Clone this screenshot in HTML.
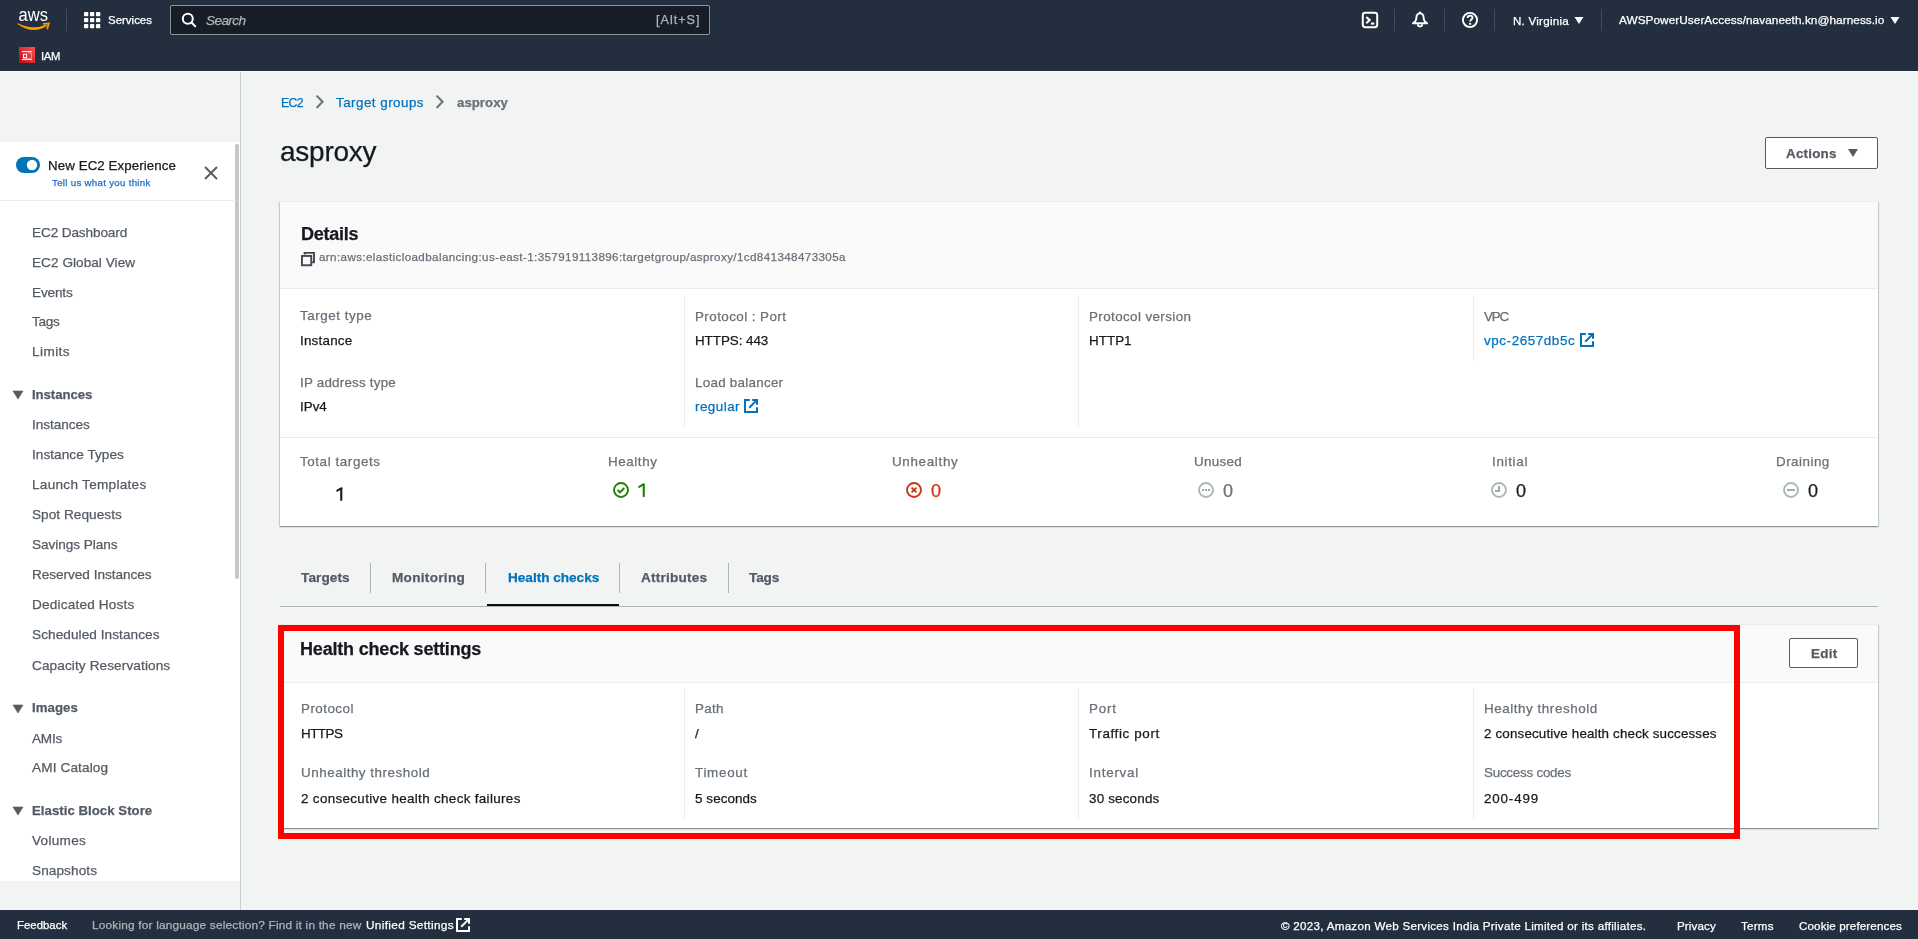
<!DOCTYPE html>
<html><head><meta charset="utf-8"><title>asproxy | EC2</title>
<style>
html,body{margin:0;padding:0}
body{width:1918px;height:939px;overflow:hidden;position:relative;background:#f2f3f3;font-family:"Liberation Sans",sans-serif}
.t{position:absolute;white-space:nowrap;line-height:1;will-change:transform;-webkit-text-stroke:0.25px currentColor}
.r{position:absolute}
svg.r{overflow:visible;will-change:transform}
</style></head><body>
<div class="r" style="left:0px;top:0px;width:1918px;height:71px;background:#232f3e"></div>
<div class="r" style="left:0px;top:71px;width:1918px;height:1px;background:#f9fafa"></div>
<svg class="r" style="left:0px;top:0px" width="60" height="40" viewBox="0 0 60 40">
<text x="18.6" y="20.7" font-family="Liberation Sans" font-size="18.2" fill="#fff" textLength="29.4" lengthAdjust="spacingAndGlyphs">aws</text>
<path d="M17.7 22.9 Q 32.5 30.8 46.3 24.5 L46.9 25.9 Q 32.5 35 17.5 23.9 Z" fill="#f90"/>
<path d="M43.6 23.9 L48.8 23.4 L47.3 28.4" stroke="#f90" stroke-width="1.8" fill="none" stroke-linecap="round" stroke-linejoin="miter"/>
</svg>
<div class="r" style="left:66px;top:9px;width:1px;height:22px;background:#414d5c"></div>
<svg class="r" style="left:84px;top:12px" width="17" height="17" viewBox="0 0 17 17"><rect x="0" y="0" width="4.3" height="4.3" rx="0.8" fill="#fff"/><rect x="6" y="0" width="4.3" height="4.3" rx="0.8" fill="#fff"/><rect x="12" y="0" width="4.3" height="4.3" rx="0.8" fill="#fff"/><rect x="0" y="6" width="4.3" height="4.3" rx="0.8" fill="#fff"/><rect x="6" y="6" width="4.3" height="4.3" rx="0.8" fill="#fff"/><rect x="12" y="6" width="4.3" height="4.3" rx="0.8" fill="#fff"/><rect x="0" y="12" width="4.3" height="4.3" rx="0.8" fill="#fff"/><rect x="6" y="12" width="4.3" height="4.3" rx="0.8" fill="#fff"/><rect x="12" y="12" width="4.3" height="4.3" rx="0.8" fill="#fff"/></svg>
<div class="t" style="left:108.00px;top:15.47px;font-size:11.5px;letter-spacing:-0.015px;color:#fff;">Services</div>
<div class="r" style="left:170px;top:5px;width:540px;height:30px;background:#161d26;border:1px solid #879596;border-radius:2px;box-sizing:border-box"></div>
<svg class="r" style="left:181px;top:12px" width="16" height="16" viewBox="0 0 16 16">
<circle cx="6.8" cy="6.8" r="5" stroke="#fff" stroke-width="2" fill="none"/><path d="M10.5 10.5 L14.2 14.2" stroke="#fff" stroke-width="2" stroke-linecap="round"/></svg>
<div class="t" style="left:206.00px;top:13.59px;font-size:13.6px;letter-spacing:-0.616px;color:#aab7b8;font-style:italic;">Search</div>
<div class="t" style="left:655.60px;top:14.33px;font-size:12.6px;letter-spacing:0.991px;color:#aab7b8;">[Alt+S]</div>
<svg class="r" style="left:1361px;top:11px" width="18" height="18" viewBox="0 0 18 18">
<rect x="1.8" y="1.8" width="14.4" height="14.4" rx="2.4" stroke="#fff" stroke-width="2" fill="none"/>
<path d="M5.3 6 L8.7 9.1 L5.3 12.3" stroke="#fff" stroke-width="2.1" fill="none"/>
<path d="M9.9 12.6 H13.3" stroke="#fff" stroke-width="2.1"/></svg>
<div class="r" style="left:1394px;top:9px;width:1px;height:22px;background:#414d5c"></div>
<svg class="r" style="left:1411px;top:11px" width="18" height="18" viewBox="0 0 18 18">
<path d="M9 2.4 C 6.5 2.4, 5.6 4.2, 5.4 6.2 L 5.1 8.6 C 4.9 10.1, 3.6 11.2, 1.9 12.3 H16.1 C 14.4 11.2, 13.1 10.1, 12.9 8.6 L 12.6 6.2 C 12.4 4.2, 11.5 2.4, 9 2.4 Z" stroke="#fff" stroke-width="1.9" fill="none" stroke-linejoin="round"/>
<circle cx="9" cy="1.5" r="1.1" fill="#fff"/>
<path d="M6.8 13.2 A2.2 2.2 0 0 0 11.2 13.2" stroke="#fff" stroke-width="1.9" fill="none"/></svg>
<div class="r" style="left:1444px;top:9px;width:1px;height:22px;background:#414d5c"></div>
<svg class="r" style="left:1461px;top:11px" width="18" height="18" viewBox="0 0 18 18">
<circle cx="9" cy="9" r="7.1" stroke="#fff" stroke-width="1.9" fill="none"/>
<path d="M6.6 7.1 C 6.6 5.4, 7.9 4.6, 9.1 4.6 C 10.5 4.6, 11.5 5.6, 11.5 6.8 C 11.5 8.4, 9.1 8.7, 9.1 10.6" stroke="#fff" stroke-width="1.9" fill="none"/>
<rect x="8.1" y="11.8" width="2" height="2" fill="#fff"/></svg>
<div class="r" style="left:1494px;top:9px;width:1px;height:22px;background:#414d5c"></div>
<div class="t" style="left:1512.60px;top:15.38px;font-size:11.6px;letter-spacing:0.237px;color:#fff;">N. Virginia</div>
<svg class="r" style="left:1574px;top:16px" width="10" height="9" viewBox="0 0 10 9"><path d="M0.5 1 H9.5 L5 8 Z" fill="#fff"/></svg>
<div class="r" style="left:1601px;top:9px;width:1px;height:22px;background:#414d5c"></div>
<div class="t" style="left:1619.00px;top:15.21px;font-size:11.8px;letter-spacing:0.049px;color:#fff;">AWSPowerUserAccess/navaneeth.kn@harness.io</div>
<svg class="r" style="left:1890px;top:16px" width="10" height="9" viewBox="0 0 10 9"><path d="M0.5 1 H9.5 L5 8 Z" fill="#fff"/></svg>
<svg class="r" style="left:19px;top:47px" width="16" height="16" viewBox="0 0 16 16">
<defs><linearGradient id="ig" x1="0" y1="1" x2="1" y2="0"><stop offset="0" stop-color="#bd0816"/><stop offset="1" stop-color="#ff5252"/></linearGradient></defs>
<rect width="16" height="16" fill="url(#ig)"/>
<path d="M3 4.6 H13 M3 12.6 H13" stroke="#fff" stroke-width="1" opacity="0.95"/>
<rect x="4.4" y="7.3" width="3.2" height="3.2" stroke="#fff" stroke-width="1" fill="none"/>
<path d="M9 6 H12.3 V11.4 H4" stroke="#fff" stroke-width="0.8" fill="none" opacity="0.6"/></svg>
<div class="t" style="left:40.80px;top:50.53px;font-size:11.3px;letter-spacing:-0.343px;color:#fff;">IAM</div>
<div class="r" style="left:0px;top:142px;width:240px;height:739px;background:#fff"></div>
<div class="r" style="left:240px;top:72px;width:1px;height:838px;background:#cbd0d2"></div>
<div class="r" style="left:235.4px;top:143.5px;width:3.3px;height:435.7px;background:#c4c7cc;border-radius:1.6px"></div>
<div class="r" style="left:0px;top:200px;width:236px;height:1px;background:#eaeded"></div>
<svg class="r" style="left:16px;top:157px" width="24" height="16" viewBox="0 0 24 16">
<rect x="0" y="0" width="24" height="16" rx="8" fill="#0073bb"/><circle cx="16" cy="8" r="5.2" fill="#fff"/></svg>
<div class="t" style="left:48.00px;top:159.34px;font-size:13.3px;letter-spacing:0.093px;color:#16191f;">New EC2 Experience</div>
<div class="t" style="left:51.50px;top:178.39px;font-size:9.7px;letter-spacing:0.299px;color:#1b6fc4;">Tell us what you think</div>
<svg class="r" style="left:203px;top:165px" width="16" height="16" viewBox="0 0 16 16">
<path d="M2 2 L14 14 M14 2 L2 14" stroke="#545b64" stroke-width="1.9"/></svg>
<div class="t" style="left:32.40px;top:225.59px;font-size:13.6px;letter-spacing:-0.122px;color:#545b64;">EC2 Dashboard</div>
<div class="t" style="left:32.40px;top:255.89px;font-size:13.6px;letter-spacing:0.042px;color:#545b64;">EC2 Global View</div>
<div class="t" style="left:32.40px;top:285.69px;font-size:13.6px;letter-spacing:-0.156px;color:#545b64;">Events</div>
<div class="t" style="left:32.40px;top:315.49px;font-size:13.6px;letter-spacing:-0.277px;color:#545b64;">Tags</div>
<div class="t" style="left:32.40px;top:345.39px;font-size:13.6px;letter-spacing:0.414px;color:#545b64;">Limits</div>
<div class="t" style="left:31.80px;top:387.63px;font-size:13.2px;letter-spacing:-0.073px;color:#545b64;font-weight:700;">Instances</div>
<svg class="r" style="left:12px;top:389.8px" width="12" height="10" viewBox="0 0 12 10"><path d="M1 1 H11 L6 9 Z" fill="#545b64" stroke="#545b64" stroke-width="0.6" stroke-linejoin="round"/></svg>
<div class="t" style="left:32.40px;top:418.49px;font-size:13.6px;letter-spacing:-0.038px;color:#545b64;">Instances</div>
<div class="t" style="left:32.40px;top:448.39px;font-size:13.6px;letter-spacing:0.052px;color:#545b64;">Instance Types</div>
<div class="t" style="left:32.40px;top:478.49px;font-size:13.6px;letter-spacing:0.278px;color:#545b64;">Launch Templates</div>
<div class="t" style="left:32.40px;top:508.49px;font-size:13.6px;letter-spacing:0.049px;color:#545b64;">Spot Requests</div>
<div class="t" style="left:32.40px;top:538.49px;font-size:13.6px;letter-spacing:-0.049px;color:#545b64;">Savings Plans</div>
<div class="t" style="left:32.40px;top:568.49px;font-size:13.6px;letter-spacing:-0.035px;color:#545b64;">Reserved Instances</div>
<div class="t" style="left:32.40px;top:598.49px;font-size:13.6px;letter-spacing:0.186px;color:#545b64;">Dedicated Hosts</div>
<div class="t" style="left:32.40px;top:628.49px;font-size:13.6px;letter-spacing:0.074px;color:#545b64;">Scheduled Instances</div>
<div class="t" style="left:32.40px;top:658.69px;font-size:13.6px;letter-spacing:0.107px;color:#545b64;">Capacity Reservations</div>
<div class="t" style="left:31.80px;top:701.43px;font-size:13.2px;letter-spacing:0.079px;color:#545b64;font-weight:700;">Images</div>
<svg class="r" style="left:12px;top:703.6px" width="12" height="10" viewBox="0 0 12 10"><path d="M1 1 H11 L6 9 Z" fill="#545b64" stroke="#545b64" stroke-width="0.6" stroke-linejoin="round"/></svg>
<div class="t" style="left:32.40px;top:731.89px;font-size:13.6px;letter-spacing:-0.225px;color:#545b64;">AMIs</div>
<div class="t" style="left:32.40px;top:761.49px;font-size:13.6px;letter-spacing:0.127px;color:#545b64;">AMI Catalog</div>
<div class="t" style="left:31.80px;top:803.83px;font-size:13.2px;letter-spacing:0.039px;color:#545b64;font-weight:700;">Elastic Block Store</div>
<svg class="r" style="left:12px;top:806.0px" width="12" height="10" viewBox="0 0 12 10"><path d="M1 1 H11 L6 9 Z" fill="#545b64" stroke="#545b64" stroke-width="0.6" stroke-linejoin="round"/></svg>
<div class="t" style="left:32.40px;top:834.49px;font-size:13.6px;letter-spacing:0.274px;color:#545b64;">Volumes</div>
<div class="t" style="left:32.40px;top:864.29px;font-size:13.6px;letter-spacing:0.093px;color:#545b64;">Snapshots</div>
<div class="t" style="left:280.90px;top:96.69px;font-size:12.3px;letter-spacing:-0.612px;color:#0073bb;">EC2</div>
<svg class="r" style="left:314px;top:94px" width="12" height="16" viewBox="0 0 12 16"><path d="M2.6 1.6 L8.6 7.8 L2.6 14" stroke="#687078" stroke-width="2" fill="none"/></svg>
<div class="t" style="left:336.40px;top:95.96px;font-size:13.4px;letter-spacing:0.472px;color:#0073bb;">Target groups</div>
<svg class="r" style="left:434px;top:94px" width="12" height="16" viewBox="0 0 12 16"><path d="M2.6 1.6 L8.6 7.8 L2.6 14" stroke="#687078" stroke-width="2" fill="none"/></svg>
<div class="t" style="left:456.90px;top:96.13px;font-size:13.2px;letter-spacing:0.046px;color:#687078;font-weight:700;">asproxy</div>
<div class="t" style="left:280.40px;top:138.00px;font-size:28px;letter-spacing:-0.245px;color:#16191f;">asproxy</div>
<div class="r" style="left:1765px;top:137px;width:113px;height:32px;background:#fff;border:1px solid #545b64;border-radius:2px;box-sizing:border-box"></div>
<div class="t" style="left:1786.40px;top:146.66px;font-size:13.4px;letter-spacing:0.209px;color:#545b64;font-weight:700;">Actions</div>
<svg class="r" style="left:1847px;top:148px" width="12" height="10" viewBox="0 0 12 10"><path d="M1 1 H11 L6 9 Z" fill="#545b64"/></svg>
<div class="r" style="left:280px;top:201px;width:1598px;height:325px;background:#fff;box-shadow:0 1px 1px 0 rgba(20,50,50,.24),1px 1px 1px 0 rgba(0,28,36,.15),-1px 1px 1px 0 rgba(0,28,36,.15);"></div>
<div class="r" style="left:280px;top:201px;width:1598px;height:87px;background:#fafafa;border-top:1px solid #eaeded;box-sizing:border-box"></div>
<div class="r" style="left:280px;top:288px;width:1598px;height:1px;background:#eaeded"></div>
<div class="t" style="left:300.70px;top:225.06px;font-size:18px;letter-spacing:-0.240px;color:#16191f;font-weight:700;">Details</div>
<svg class="r" style="left:300px;top:251px" width="16" height="16" viewBox="0 0 16 16">
<path d="M4.6 3.6 V1.9 H14 V11.3 H12.2" stroke="#414750" stroke-width="1.9" fill="none"/>
<rect x="1.95" y="4.95" width="9.3" height="9.3" stroke="#414750" stroke-width="1.9" fill="none"/></svg>
<div class="t" style="left:319.20px;top:251.18px;font-size:11.6px;letter-spacing:0.401px;color:#687078;">arn:aws:elasticloadbalancing:us-east-1:357919113896:targetgroup/asproxy/1cd841348473305a</div>
<div class="r" style="left:684px;top:295px;width:1px;height:131px;background:#eaeded"></div>
<div class="r" style="left:1078px;top:295px;width:1px;height:131px;background:#eaeded"></div>
<div class="r" style="left:1473px;top:295px;width:1px;height:66px;background:#eaeded"></div>
<div class="t" style="left:300.20px;top:309.46px;font-size:13.4px;letter-spacing:0.550px;color:#687078;">Target type</div>
<div class="t" style="left:300.20px;top:333.66px;font-size:13.4px;letter-spacing:0.221px;color:#16191f;">Instance</div>
<div class="t" style="left:300.20px;top:375.96px;font-size:13.4px;letter-spacing:0.210px;color:#687078;">IP address type</div>
<div class="t" style="left:300.20px;top:399.56px;font-size:13.4px;letter-spacing:0.000px;color:#16191f;">IPv4</div>
<div class="t" style="left:695.00px;top:309.66px;font-size:13.4px;letter-spacing:0.437px;color:#687078;">Protocol : Port</div>
<div class="t" style="left:695.00px;top:333.66px;font-size:13.4px;letter-spacing:-0.048px;color:#16191f;">HTTPS: 443</div>
<div class="t" style="left:695.00px;top:375.96px;font-size:13.4px;letter-spacing:0.265px;color:#687078;">Load balancer</div>
<div class="t" style="left:695.00px;top:399.56px;font-size:13.4px;letter-spacing:0.482px;color:#0073bb;">regular</div>
<svg class="r" style="left:744px;top:399px" width="14" height="14" viewBox="0 0 14 14"><path d="M5.8 1 H1 V13 H13 V8.2" stroke="#0073bb" stroke-width="2" fill="none"/><path d="M8.2 1 H13 V5.8" stroke="#0073bb" stroke-width="2" fill="none"/><path d="M12.6 1.4 L5.2 8.8" stroke="#0073bb" stroke-width="2"/></svg>
<div class="t" style="left:1089.00px;top:309.66px;font-size:13.4px;letter-spacing:0.395px;color:#687078;">Protocol version</div>
<div class="t" style="left:1089.00px;top:333.66px;font-size:13.4px;letter-spacing:0.039px;color:#16191f;">HTTP1</div>
<div class="t" style="left:1483.50px;top:309.66px;font-size:13.4px;letter-spacing:-1.219px;color:#687078;">VPC</div>
<div class="t" style="left:1483.80px;top:333.66px;font-size:13.4px;letter-spacing:0.592px;color:#0073bb;">vpc-2657db5c</div>
<svg class="r" style="left:1580px;top:333px" width="14" height="14" viewBox="0 0 14 14"><path d="M5.8 1 H1 V13 H13 V8.2" stroke="#0073bb" stroke-width="2" fill="none"/><path d="M8.2 1 H13 V5.8" stroke="#0073bb" stroke-width="2" fill="none"/><path d="M12.6 1.4 L5.2 8.8" stroke="#0073bb" stroke-width="2"/></svg>
<div class="r" style="left:280px;top:437px;width:1598px;height:1px;background:#eaeded"></div>
<div class="t" style="left:300.30px;top:455.46px;font-size:13.4px;letter-spacing:0.584px;color:#687078;">Total targets</div>
<div class="t" style="left:608.40px;top:455.46px;font-size:13.4px;letter-spacing:0.579px;color:#687078;">Healthy</div>
<div class="t" style="left:892.20px;top:455.46px;font-size:13.4px;letter-spacing:0.683px;color:#687078;">Unhealthy</div>
<div class="t" style="left:1193.80px;top:455.46px;font-size:13.4px;letter-spacing:0.321px;color:#687078;">Unused</div>
<div class="t" style="left:1492.30px;top:455.46px;font-size:13.4px;letter-spacing:0.685px;color:#687078;">Initial</div>
<div class="t" style="left:1775.90px;top:455.46px;font-size:13.4px;letter-spacing:0.484px;color:#687078;">Draining</div>
<svg class="r" style="left:330px;top:480px" width="20" height="25" viewBox="330 480 20 25"><path d="M337.3 490.7 L341.6 488.2" stroke="#16191f" stroke-width="2" stroke-linecap="round"/><rect x="340.2" y="487.9" width="2.1" height="12.9" rx="0.4" fill="#16191f"/></svg>
<svg class="r" style="left:613px;top:482px" width="16" height="16" viewBox="0 0 16 16"><circle cx="8" cy="8" r="7" stroke="#1d8102" stroke-width="1.9" fill="none"/><path d="M4.6 8 L7 10.3 L11.3 6" stroke="#1d8102" stroke-width="1.9" fill="none"/></svg>
<svg class="r" style="left:632px;top:480px" width="20" height="25" viewBox="632 480 20 25"><path d="M639.2 486.9 L643.8 484.2" stroke="#1d8102" stroke-width="2" stroke-linecap="round"/><rect x="642.7" y="483.9" width="2.1" height="13" rx="0.4" fill="#1d8102"/></svg>
<svg class="r" style="left:906px;top:482px" width="16" height="16" viewBox="0 0 16 16"><circle cx="8" cy="8" r="7" stroke="#d13212" stroke-width="1.9" fill="none"/><path d="M5.6 5.6 L10.4 10.4 M10.4 5.6 L5.6 10.4" stroke="#d13212" stroke-width="1.9"/></svg>
<div class="t" style="left:930.70px;top:481.76px;font-size:18px;letter-spacing:0.000px;color:#d13212;">0</div>
<svg class="r" style="left:1198px;top:482px" width="16" height="16" viewBox="0 0 16 16"><circle cx="8" cy="8" r="7" stroke="#aab7b8" stroke-width="1.9" fill="none"/><rect x="4" y="7" width="2" height="2" fill="#9ba7a8"/><rect x="7" y="7" width="2" height="2" fill="#9ba7a8"/><rect x="10" y="7" width="2" height="2" fill="#9ba7a8"/></svg>
<div class="t" style="left:1223.20px;top:481.76px;font-size:18px;letter-spacing:0.000px;color:#687078;">0</div>
<svg class="r" style="left:1491px;top:482px" width="16" height="16" viewBox="0 0 16 16"><circle cx="8" cy="8" r="7" stroke="#aab7b8" stroke-width="1.9" fill="none"/><path d="M8 4 V9 H4" stroke="#9ba7a8" stroke-width="1.9" fill="none"/></svg>
<div class="t" style="left:1515.70px;top:481.76px;font-size:18px;letter-spacing:0.000px;color:#16191f;">0</div>
<svg class="r" style="left:1783px;top:482px" width="16" height="16" viewBox="0 0 16 16"><circle cx="8" cy="8" r="7" stroke="#aab7b8" stroke-width="1.9" fill="none"/><path d="M4 8 H12" stroke="#9ba7a8" stroke-width="1.9"/></svg>
<div class="t" style="left:1808.20px;top:481.76px;font-size:18px;letter-spacing:0.000px;color:#16191f;">0</div>
<div class="t" style="left:301.00px;top:571.39px;font-size:13.6px;letter-spacing:0.098px;color:#545b64;font-weight:700;">Targets</div>
<div class="t" style="left:392.40px;top:571.39px;font-size:13.6px;letter-spacing:0.284px;color:#545b64;font-weight:700;">Monitoring</div>
<div class="t" style="left:507.60px;top:571.39px;font-size:13.6px;letter-spacing:-0.013px;color:#0073bb;font-weight:700;">Health checks</div>
<div class="t" style="left:640.80px;top:571.39px;font-size:13.6px;letter-spacing:0.219px;color:#545b64;font-weight:700;">Attributes</div>
<div class="t" style="left:749.40px;top:571.39px;font-size:13.6px;letter-spacing:-0.145px;color:#545b64;font-weight:700;">Tags</div>
<div class="r" style="left:370px;top:563px;width:1px;height:30px;background:#aab7b8"></div>
<div class="r" style="left:485px;top:563px;width:1px;height:30px;background:#aab7b8"></div>
<div class="r" style="left:619px;top:563px;width:1px;height:30px;background:#aab7b8"></div>
<div class="r" style="left:728px;top:563px;width:1px;height:30px;background:#aab7b8"></div>
<div class="r" style="left:280px;top:606px;width:1598px;height:1px;background:#aab7b8"></div>
<div class="r" style="left:487px;top:604px;width:132px;height:2px;background:#0b0d12"></div>
<div class="r" style="left:280px;top:624px;width:1598px;height:204px;background:#fff;box-shadow:0 1px 1px 0 rgba(20,50,50,.24),1px 1px 1px 0 rgba(0,28,36,.15),-1px 1px 1px 0 rgba(0,28,36,.15);"></div>
<div class="r" style="left:280px;top:624px;width:1598px;height:58px;background:#fafafa;border-top:1px solid #eaeded;box-sizing:border-box"></div>
<div class="r" style="left:280px;top:682px;width:1598px;height:1px;background:#eaeded"></div>
<div class="t" style="left:300.30px;top:639.76px;font-size:18px;letter-spacing:-0.189px;color:#16191f;font-weight:700;">Health check settings</div>
<div class="r" style="left:1789px;top:638px;width:69px;height:30px;background:#fff;border:1px solid #545b64;border-radius:2px;box-sizing:border-box"></div>
<div class="t" style="left:1810.50px;top:646.66px;font-size:13.4px;letter-spacing:0.269px;color:#545b64;font-weight:700;">Edit</div>
<div class="r" style="left:684px;top:689px;width:1px;height:129px;background:#eaeded"></div>
<div class="r" style="left:1078px;top:689px;width:1px;height:129px;background:#eaeded"></div>
<div class="r" style="left:1473px;top:689px;width:1px;height:129px;background:#eaeded"></div>
<div class="t" style="left:300.50px;top:701.56px;font-size:13.4px;letter-spacing:0.465px;color:#687078;">Protocol</div>
<div class="t" style="left:300.50px;top:726.76px;font-size:13.4px;letter-spacing:-0.505px;color:#16191f;">HTTPS</div>
<div class="t" style="left:300.50px;top:766.46px;font-size:13.4px;letter-spacing:0.534px;color:#687078;">Unhealthy threshold</div>
<div class="t" style="left:300.50px;top:791.66px;font-size:13.4px;letter-spacing:0.343px;color:#16191f;">2 consecutive health check failures</div>
<div class="t" style="left:695.00px;top:701.56px;font-size:13.4px;letter-spacing:0.310px;color:#687078;">Path</div>
<div class="t" style="left:695.00px;top:726.76px;font-size:13.4px;letter-spacing:0.000px;color:#16191f;">/</div>
<div class="t" style="left:695.00px;top:766.46px;font-size:13.4px;letter-spacing:0.732px;color:#687078;">Timeout</div>
<div class="t" style="left:695.00px;top:791.66px;font-size:13.4px;letter-spacing:0.091px;color:#16191f;">5 seconds</div>
<div class="t" style="left:1089.00px;top:701.56px;font-size:13.4px;letter-spacing:0.804px;color:#687078;">Port</div>
<div class="t" style="left:1089.00px;top:726.76px;font-size:13.4px;letter-spacing:0.635px;color:#16191f;">Traffic port</div>
<div class="t" style="left:1089.00px;top:766.46px;font-size:13.4px;letter-spacing:0.764px;color:#687078;">Interval</div>
<div class="t" style="left:1089.00px;top:791.66px;font-size:13.4px;letter-spacing:0.195px;color:#16191f;">30 seconds</div>
<div class="t" style="left:1483.70px;top:701.56px;font-size:13.4px;letter-spacing:0.557px;color:#687078;">Healthy threshold</div>
<div class="t" style="left:1483.70px;top:726.76px;font-size:13.4px;letter-spacing:0.157px;color:#16191f;">2 consecutive health check successes</div>
<div class="t" style="left:1483.70px;top:766.46px;font-size:13.4px;letter-spacing:-0.235px;color:#687078;">Success codes</div>
<div class="t" style="left:1483.70px;top:791.66px;font-size:13.4px;letter-spacing:0.837px;color:#16191f;">200-499</div>
<div class="r" style="left:278px;top:625px;width:1462px;height:214px;border:6px solid #ff0000;box-sizing:border-box"></div>
<div class="r" style="left:0px;top:910px;width:1918px;height:29px;background:#232f3e"></div>
<div class="t" style="left:16.60px;top:920.35px;font-size:11.4px;letter-spacing:0.014px;color:#fff;">Feedback</div>
<div class="t" style="left:92.00px;top:920.01px;font-size:11.8px;letter-spacing:0.207px;color:#aab7b8;">Looking for language selection? Find it in the new</div>
<div class="t" style="left:366.00px;top:920.01px;font-size:11.8px;letter-spacing:0.329px;color:#fff;">Unified Settings</div>
<svg class="r" style="left:456px;top:918px" width="14" height="14" viewBox="0 0 14 14"><path d="M5.8 1 H1 V13 H13 V8.2" stroke="#fff" stroke-width="2" fill="none"/><path d="M8.2 1 H13 V5.8" stroke="#fff" stroke-width="2" fill="none"/><path d="M12.6 1.4 L5.2 8.8" stroke="#fff" stroke-width="2"/></svg>
<div class="t" style="left:1281.30px;top:920.18px;font-size:11.6px;letter-spacing:0.288px;color:#fff;">© 2023, Amazon Web Services India Private Limited or its affiliates.</div>
<div class="t" style="left:1676.80px;top:920.18px;font-size:11.6px;letter-spacing:0.130px;color:#fff;">Privacy</div>
<div class="t" style="left:1741.00px;top:920.18px;font-size:11.6px;letter-spacing:0.255px;color:#fff;">Terms</div>
<div class="t" style="left:1798.60px;top:920.18px;font-size:11.6px;letter-spacing:0.135px;color:#fff;">Cookie preferences</div>
</body></html>
